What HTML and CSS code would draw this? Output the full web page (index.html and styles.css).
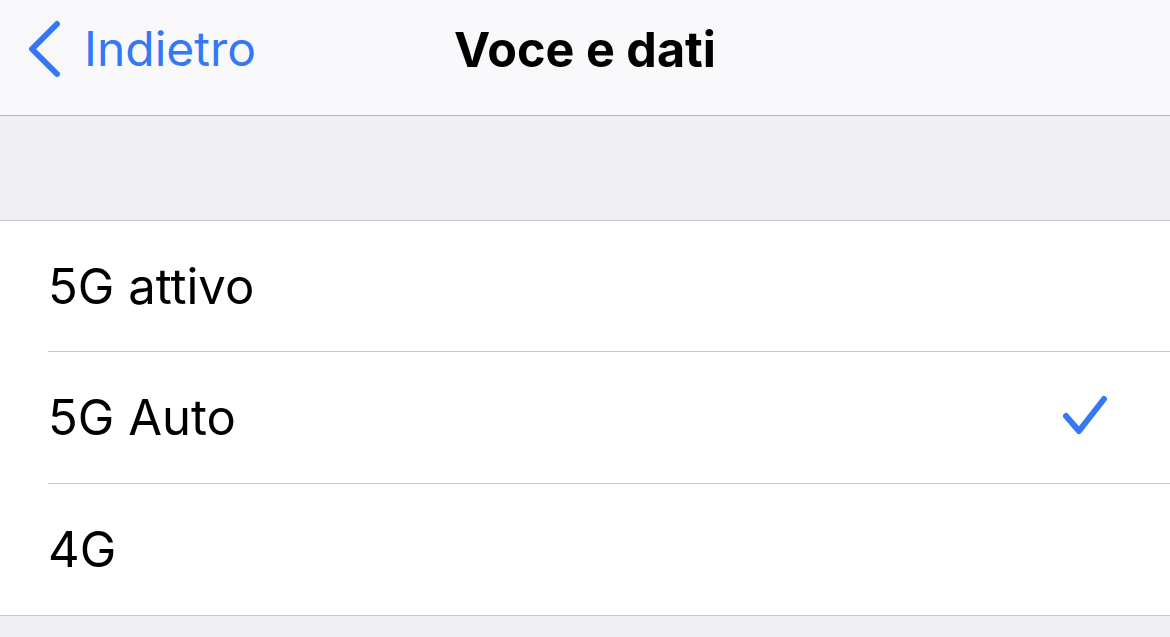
FILE: index.html
```html
<!DOCTYPE html>
<html lang="it">
<head>
    <meta charset="UTF-8">
    <meta name="viewport" content="width=device-width, initial-scale=1.0">
    <title>Voce e dati</title>
    <link rel="stylesheet" href="styles.css">
</head>
<body>
    <header class="navbar">
        <a class="back" href="#">
            <svg class="chevron" width="36" height="58" viewBox="0 0 36 58">
                <path d="M31 4 L6 29 L31 54" fill="none" stroke="#3478f6" stroke-width="6" stroke-linecap="round" stroke-linejoin="round"/>
            </svg>
            <span>Indietro</span>
        </a>
        <h1 class="title">Voce e dati</h1>
    </header>

    <div class="spacer"></div>

    <ul class="list">
        <li class="row"><span>5G attivo</span></li>
        <li class="row">
            <span>5G Auto</span>
            <svg class="check" width="48" height="48" viewBox="0 0 48 48">
                <path d="M4 22 L17 37 L42 5" fill="none" stroke="#3478f6" stroke-width="6" stroke-linecap="round" stroke-linejoin="round"/>
            </svg>
        </li>
        <li class="row"><span>4G</span></li>
    </ul>
</body>
</html>
```

FILE: styles.css
```css
* {
    margin: 0;
    padding: 0;
    box-sizing: border-box;
}

body {
    background-color: #efeff4;
    font-family: 'Inter', 'Roboto', sans-serif;
    color: #000;
    height: 637px;
    overflow: hidden;
}

.navbar {
    height: 116px;
    background-color: #f9f9fb;
    border-bottom: 1px solid #b4b4b8;
    display: flex;
    align-items: center;
    justify-content: center;
    position: relative;
}

.back {
    position: absolute;
    left: 26px;
    top: 19px;
    display: flex;
    align-items: center;
    gap: 22px;
    color: #3478f6;
    text-decoration: none;
    font-size: 48px;
}

.chevron {
    display: block;
}

.title {
    font-size: 48.5px;
    font-weight: 700;
    margin-bottom: 16px;
}

.spacer {
    height: 105px;
    border-bottom: 1px solid #c8c7cc;
}

.list {
    list-style: none;
    background: #fff;
    padding-left: 48px;
    border-bottom: 1px solid #c8c7cc;
}

.row {
    height: 131px;
    display: flex;
    align-items: center;
    justify-content: space-between;
    padding-right: 60px;
    border-bottom: 1px solid #c8c7cc;
    font-size: 49px;
}

.row:nth-child(2) {
    height: 132px;
}

.row:last-child {
    border-bottom: none;
    height: 131px;
}

.check {
    display: block;
}
```
